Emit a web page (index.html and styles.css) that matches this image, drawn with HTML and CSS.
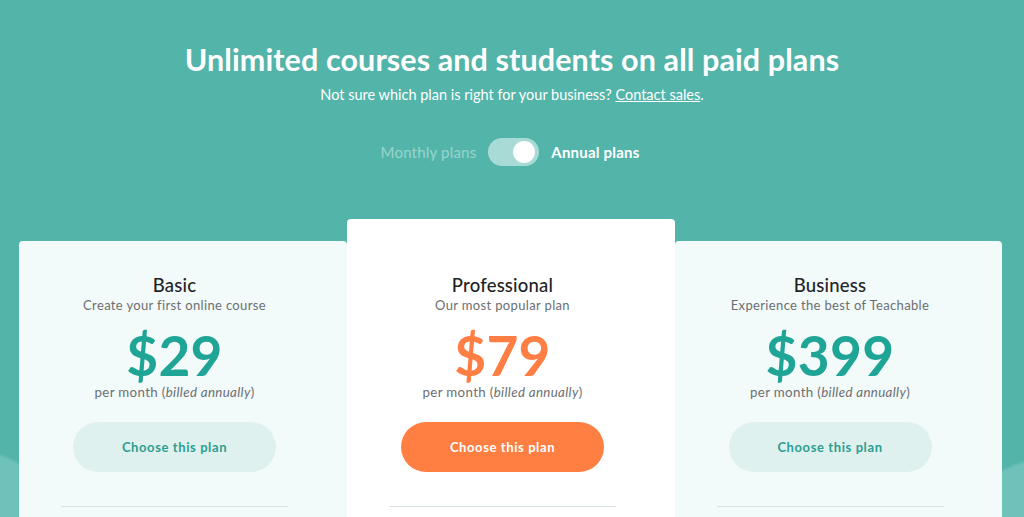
FILE: index.html
```html
<!DOCTYPE html>
<html lang="en">
<head>
<meta charset="utf-8">
<title>Pricing</title>
<link rel="stylesheet" href="styles.css">
</head>
<body>
<section class="pricing">
  <header class="intro">
    <h1 class="title">Unlimited courses and students on all paid plans</h1>
    <p class="lead">Not sure which plan is right for your business? <a href="#" class="link">Contact sales</a>.</p>
    <div class="switch-row">
      <span class="switch-label muted">Monthly plans</span>
      <span class="switch"><span class="knob"></span></span>
      <span class="switch-label active">Annual plans</span>
    </div>
  </header>
  <div class="plans">
    <article class="plan">
      <h2 class="plan-name">Basic</h2>
      <p class="plan-desc">Create your first online course</p>
      <div class="price">$29</div>
      <p class="per">per month (<em>billed annually</em>)</p>
      <a href="#" class="btn">Choose this plan</a>
      <hr class="divider">
    </article>
    <article class="plan featured">
      <h2 class="plan-name">Professional</h2>
      <p class="plan-desc">Our most popular plan</p>
      <div class="price">$79</div>
      <p class="per">per month (<em>billed annually</em>)</p>
      <a href="#" class="btn">Choose this plan</a>
      <hr class="divider">
    </article>
    <article class="plan">
      <h2 class="plan-name">Business</h2>
      <p class="plan-desc">Experience the best of Teachable</p>
      <div class="price">$399</div>
      <p class="per">per month (<em>billed annually</em>)</p>
      <a href="#" class="btn">Choose this plan</a>
      <hr class="divider">
    </article>
  </div>
</section>
</body>
</html>
```
FILE: styles.css
```css
* { box-sizing: border-box; }
html, body { margin: 0; padding: 0; }
body {
  font-family: "Lato", "Liberation Sans", sans-serif;
  height: 517px;
  overflow: hidden;
  background-color: #53b4aa;
  background-image:
    radial-gradient(ellipse 260px 200px at -120px 630px, #6fc2b9 98%, transparent 100%),
    radial-gradient(ellipse 260px 160px at 1150px 600px, #6fc2b9 98%, transparent 100%);
}
.pricing { width: 1024px; }
.intro {
  display: flex;
  flex-direction: column;
  align-items: center;
  padding-top: 40px;
  color: #fff;
}
.title {
  margin: 0;
  font-size: 30.5px;
  font-weight: 700;
  line-height: 38px;
  letter-spacing: 0.1px;
}
.lead {
  margin: 7px 0 0;
  font-size: 14.5px;
  line-height: 20px;
}
.link { color: #fff; text-decoration: underline; }
.switch-row {
  display: flex;
  align-items: center;
  gap: 12px;
  margin-top: 33px;
  margin-left: -4px;
}
.switch-label { font-size: 15px; line-height: 18px; letter-spacing: 0.2px; }
.muted { color: #9ad4cd; }
.active { font-weight: 700; color: #fff; }
.switch {
  display: flex;
  align-items: center;
  justify-content: flex-end;
  width: 51px;
  height: 28px;
  border-radius: 14px;
  background: #a8dbd5;
  padding: 3px 4px;
}
.knob {
  width: 22px;
  height: 22px;
  border-radius: 50%;
  background: #fff;
}
.plans {
  display: grid;
  grid-template-columns: 328px 328px 327px;
  align-items: start;
  margin: 53px 0 0 19px;
}
.plan {
  display: flex;
  flex-direction: column;
  align-items: center;
  margin-top: 22px;
  padding: 33px 17px 0 0;
  height: 320px;
  background: #f3fafa;
  border-radius: 4px 4px 0 0;
}
.plan.featured {
  margin-top: 0;
  padding-top: 55px;
  height: 342px;
  background: #fff;
}
.plan-name {
  margin: 0;
  font-size: 18.5px;
  font-weight: 500;
  line-height: 22px;
  color: #1e2326;
  letter-spacing: 0.2px;
}
.plan-desc {
  margin: 1px 0 0;
  font-size: 13px;
  line-height: 16px;
  color: #6b6f72;
  letter-spacing: 0.35px;
}
.price {
  margin-top: 16px;
  font-size: 55px;
  font-weight: 700;
  line-height: 52px;
  letter-spacing: 0.3px;
  color: #1fa596;
}
.featured .price { color: #ff7e44; }
.per {
  margin: 3px 0 0;
  font-size: 13.3px;
  line-height: 16px;
  color: #6b6f72;
  letter-spacing: 0.35px;
}
.btn {
  display: flex;
  align-items: center;
  justify-content: center;
  margin-top: 22px;
  width: 203px;
  height: 50px;
  border-radius: 25px;
  background: #dff1ef;
  color: #2d9e90;
  font-size: 13px;
  font-weight: 700;
  letter-spacing: 0.6px;
  text-decoration: none;
}
.featured .btn { background: #ff7e42; color: #fff; }
.divider {
  margin: 34px 0 0;
  width: 227px;
  border: 0;
  border-top: 1px solid #d5e3e2;
}
```
